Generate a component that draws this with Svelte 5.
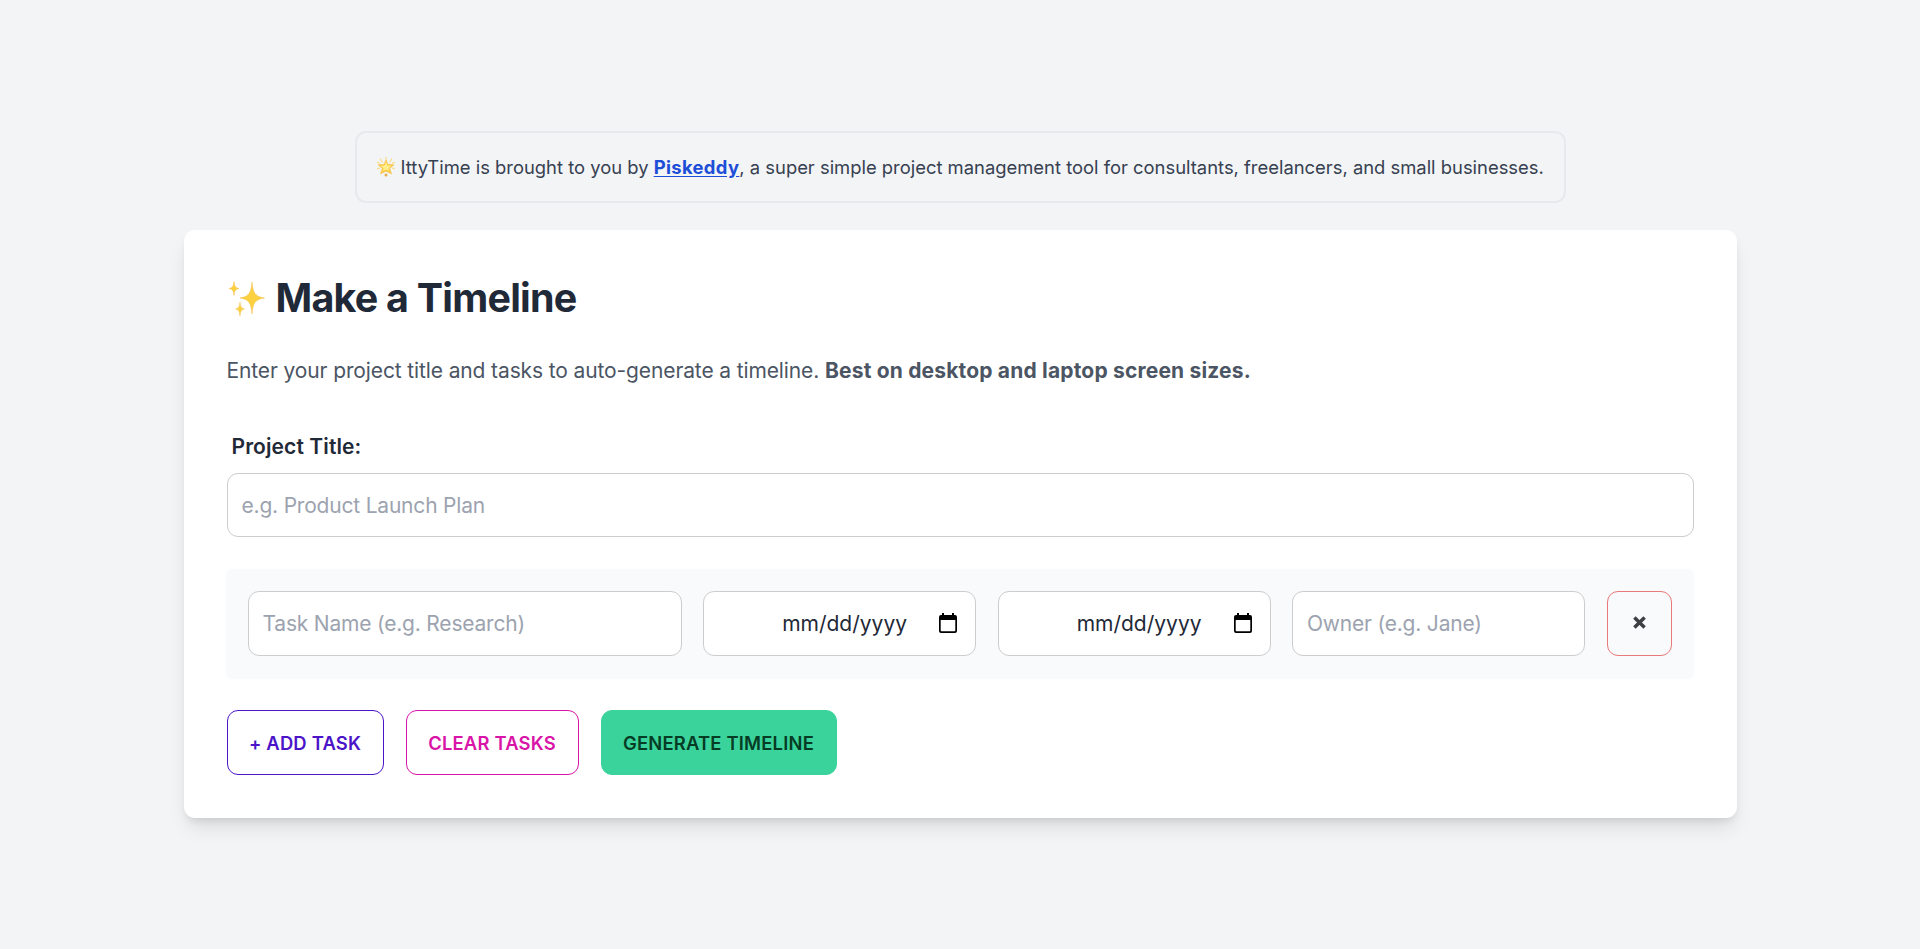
<script>
	let title = $state('');
	let nextId = 1;
	let tasks = $state([{ id: 0, name: '', start: '', end: '', owner: '' }]);

	function addTask() {
		tasks.push({ id: nextId++, name: '', start: '', end: '', owner: '' });
	}

	function removeTask(id) {
		tasks = tasks.filter((task) => task.id !== id);
	}

	function clearTasks() {
		tasks = [];
	}
</script>

{#snippet dateField(value)}
	<div class="field date">
		<span>{value || 'mm/dd/yyyy'}</span>
		<svg viewBox="0 0 18 20" aria-hidden="true">
			<path fill-rule="evenodd" d="M3 0h2v2h8V0h2v2h1a2 2 0 0 1 2 2v14a2 2 0 0 1-2 2H2a2 2 0 0 1-2-2V4a2 2 0 0 1 2-2h1zM1.7 7v10.6c0 .4.3.7.7.7h13.2c.4 0 .7-.3.7-.7V7z" />
		</svg>
	</div>
{/snippet}

<main>
	<div class="notice">
		<svg class="star" viewBox="0 0 18 20" aria-hidden="true">
			<path d="M9 0v4M3 1.500l2.500 4M15 1.500l-2.500 4M0 5l3 1.500M18 5l-3 1.500M0 12l3-1M18 12l-3-1" stroke="#f9dc8c" stroke-width="1.200" />
			<path d="M9 3l2 4.300 6 .5-4.300 3.700 2 5.500L9 14.200 3.300 17l2-5.500L1 7.800l6-.5z" fill="#fbcb45" stroke="#f6bd48" stroke-width=".5" stroke-linejoin="round" />
			<path d="M9 5l1.500 3.500 4 .3-3.100 2.500.8 2.700L9 12.500 5.800 14l.8-2.700-3.100-2.500 4-.3z" fill="#ffee8c" />
			<circle cx="9" cy="18" r="1.500" fill="#e9ae43" />
		</svg>
		<p>IttyTime is brought to you by <a href="#piskeddy">Piskeddy</a>, a super simple project management tool for consultants, freelancers, and small businesses.</p>
	</div>

	<div class="card">
		<h1>
			<svg viewBox="0 0 36 36" aria-hidden="true">
				<g fill="#fbd140" stroke="#f2bd4c" stroke-width=".5">
					<path d="M23 1c1 11 3 14.500 12.500 16C26 18.500 24 22 23 33c-1-11-3-14.500-12-16C20 15.500 22 12 23 1z" />
					<path d="M5 .5c.5 4.500 1.500 6.400 5 7-3.500.6-4.500 2.500-5 7-.5-4.500-1.500-6.400-5-7 3.500-.6 4.500-2.500 5-7z" />
					<path d="M11 21c.4 4.500 1.300 6.300 4.500 7-3.200.7-4.100 2.500-4.500 7-.4-4.500-1.300-6.300-4.500-7 3.200-.7 4.100-2.500 4.500-7z" />
				</g>
			</svg>
			<span>Make a Timeline</span>
		</h1>
		<p class="intro">Enter your project title and tasks to auto-generate a timeline. <strong>Best on desktop and laptop screen sizes.</strong></p>

		<label for="title">Project Title:</label>
		<input id="title" class="field" placeholder="e.g. Product Launch Plan" bind:value={title} />

		{#each tasks as task (task.id)}
			<div class="task">
				<input class="field name" placeholder="Task Name (e.g. Research)" bind:value={task.name} />
				{@render dateField(task.start)}
				{@render dateField(task.end)}
				<input class="field owner" placeholder="Owner (e.g. Jane)" bind:value={task.owner} />
				<button class="remove" aria-label="Remove task" onclick={() => removeTask(task.id)}>
					<svg viewBox="0 0 12 12" aria-hidden="true">
						<path d="M1.300 1.300l9.400 9.400M10.700 1.300l-9.400 9.400" />
					</svg>
				</button>
			</div>
		{/each}

		<div class="actions">
			<button class="add" onclick={addTask}>+ ADD TASK</button>
			<button class="clear" onclick={clearTasks}>CLEAR TASKS</button>
			<button class="generate">GENERATE TIMELINE</button>
		</div>
	</div>
</main>

<style>
	:global(body) {
		background: #f3f4f6;
	}

	main, main * {
		box-sizing: border-box;
	}

	main {
		min-height: 949px;
		padding-top: 131px;
		display: flex;
		flex-direction: column;
		align-items: center;
		font-family: Inter, "Liberation Sans", sans-serif;
		font-size: 21px;
		color: #1f2937;
	}

	h1, p {
		margin: 0;
	}

	svg {
		flex: none;
	}

	.notice {
		width: 1211px;
		height: 72px;
		padding-left: 20px;
		display: flex;
		align-items: center;
		border: 2px solid #e7e9ec;
		border-radius: 11px;
		font-size: 18.4px;
		color: #374151;
		white-space: nowrap;
	}

	.star {
		width: 18px;
		height: 20px;
		margin-right: 6px;
	}

	a {
		color: #1d4ed8;
		font-weight: 700;
		letter-spacing: .35px;
		text-underline-offset: 2px;
	}

	.card {
		width: 1553px;
		height: 588px;
		margin-top: 27px;
		padding: 43px;
		background: #fff;
		border-radius: 11px;
		box-shadow: 0 13px 20px -4px rgba(0, 0, 0, .1), 0 5px 8px -3px rgba(0, 0, 0, .1);
	}

	h1 {
		height: 51px;
		display: flex;
		align-items: center;
		font-size: 39.4px;
		line-height: 49px;
		font-weight: 700;
		letter-spacing: -.75px;
	}

	h1 svg {
		width: 36px;
		height: 36px;
		margin: 0 11px 0 2px;
	}

	.intro {
		margin-top: 31px;
		line-height: 32px;
		color: #4b5563;
		letter-spacing: -.12px;
		white-space: nowrap;
	}

	strong {
		letter-spacing: .18px;
	}

	label {
		display: block;
		width: fit-content;
		margin: 44px 0 10px 5px;
		line-height: 32px;
		font-weight: 600;
		letter-spacing: .1px;
		color: #1f2937;
	}

	.field {
		display: block;
		min-width: 0;
		height: 65px;
		padding: 0 14px;
		border: 1px solid #cccdcf;
		border-radius: 11px;
		background: #fff;
		font: inherit;
		color: #1f2937;
	}

	.field::placeholder {
		color: #9ca3af;
		letter-spacing: -.2px;
		opacity: 1;
	}

	#title {
		width: 100%;
		height: 64px;
	}

	.task {
		height: 110px;
		margin: 32px 0 0 -1px;
		padding: 22px;
		display: grid;
		grid-template-columns: 434px 273px 273px 293px 65px;
		justify-content: space-between;
		background: #f9fafb;
		border-radius: 6px;
	}

	.date {
		padding-right: 18px;
		display: flex;
		align-items: center;
		justify-content: flex-end;
	}

	.date svg {
		width: 18px;
		height: 20px;
		margin: 0 0 2px 32px;
		fill: #000;
	}

	button {
		height: 65px;
		padding: 0;
		border: 1.5px solid;
		border-radius: 11px;
		background: none;
		font: 600 18.4px Inter, "Liberation Sans", sans-serif;
		letter-spacing: .2px;
		white-space: nowrap;
	}

	.remove {
		display: flex;
		align-items: center;
		justify-content: center;
		border-color: #e97878;
	}

	.remove svg {
		width: 13px;
		height: 13px;
		margin-bottom: 2px;
		fill: none;
		stroke: #3d4043;
		stroke-width: 3.2;
	}

	.actions {
		margin-top: 30px;
		padding-top: 1px;
		display: flex;
		gap: 22px;
	}

	.add {
		width: 157px;
		color: #4b14c8;
	}

	.clear {
		width: 173px;
		color: #d915a8;
	}

	.generate {
		width: 236px;
		border-color: #3ad39c;
		background: #3ad39c;
		color: #063b24;
	}
</style>
